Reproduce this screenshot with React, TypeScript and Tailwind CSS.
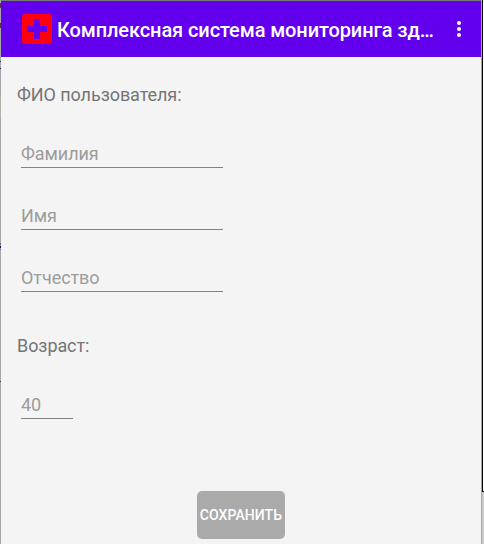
const marks = [
  { gap: 'mt-[3px]', look: 'h-[5px] bg-[#712b58]' },
  { gap: 'mt-[15px]', look: 'h-[5px] bg-[#712b58]' },
  { gap: 'mt-[33px]', look: 'h-px bg-[#3b2670]' },
  { gap: 'mt-[6px]', look: 'h-px bg-[#3b2670]' },
  { gap: 'mt-[27px]', look: 'h-[22px] bg-[#b5b1a2]' },
  { gap: 'mt-[125px]', look: 'h-[2px] bg-[#805a78]' },
  { gap: 'mt-px', look: 'h-[2px] bg-[#24106c]' },
  { gap: 'mt-px', look: 'h-px bg-[#8d6a80]' },
  { gap: 'mt-[131px]', look: 'h-px bg-[#35346d]' },
];

function Field({ placeholder, width, className = '' }: { placeholder: string; width: string; className?: string }) {
  return (
    <input
      placeholder={placeholder}
      className={`block h-[26px] border-b border-[#828282] bg-transparent pb-[3px] text-[18px] leading-[22px] tracking-[-0.06px] text-[#606060] outline-none placeholder:text-[#9c9c9c] placeholder:opacity-100 ${width} ${className}`}
    />
  );
}

export default function App() {
  return (
    <div className="flex h-[544px] w-[484px] overflow-hidden bg-[#f4f4f4] font-['Roboto',sans-serif]">
      <div className="h-full w-px shrink-0 bg-[#a6a6a6]">
        {marks.map((m, i) => (
          <div key={i} className={`${m.gap} ${m.look}`} />
        ))}
      </div>
      <div className="flex h-full w-[480px] shrink-0 flex-col border-t border-[#777777]">
        <header className="flex h-14 shrink-0 items-center bg-[#6200ee] pl-[21px] pr-5">
          <svg width="30" height="30" viewBox="0 0 30 30" className="shrink-0">
            <rect width="30" height="30" rx="3" fill="#ff0010" />
            <path d="M12 5h6v7h7v6h-7v7h-6v-7H5v-6h7z" fill="#6200ee" />
          </svg>
          <h1 className="ml-[5px] whitespace-nowrap pt-[2px] text-[20px] font-medium leading-6 tracking-[-0.1px] text-white">
            Комплексная система мониторинга зд…
          </h1>
          <button className="ml-auto flex w-1 flex-col gap-[2px]" aria-label="Меню">
            <span className="size-1 rounded-full bg-white" />
            <span className="size-1 rounded-full bg-white" />
            <span className="size-1 rounded-full bg-white" />
          </button>
        </header>
        <main className="flex flex-1 flex-col pl-4 pt-[26px] text-[18px] leading-6 tracking-[-0.08px] text-[#757575]">
          <p>ФИО пользователя:</p>
          <div className="ml-1 mt-[35px] flex flex-col gap-9">
            <Field placeholder="Фамилия" width="w-[202px]" />
            <Field placeholder="Имя" width="w-[202px]" />
            <Field placeholder="Отчество" width="w-[202px]" />
          </div>
          <p className="mt-[42px]">Возраст:</p>
          <Field placeholder="40" width="w-[52px]" className="ml-1 mt-[35px]" />
          <button className="ml-[180px] mt-[72px] h-12 w-[88px] whitespace-nowrap rounded-[5px] bg-[#aaaaaa] text-[14px] font-medium tracking-[0.08px] text-white">
            СОХРАНИТЬ
          </button>
        </main>
      </div>
      <div className="h-full w-px shrink-0 bg-[#a6a6a6]" />
      <div className="flex h-full w-[2px] shrink-0 flex-col bg-[#cbcbcb]">
        <div className="h-[492px] border-b border-l border-black bg-white" />
      </div>
    </div>
  );
}
